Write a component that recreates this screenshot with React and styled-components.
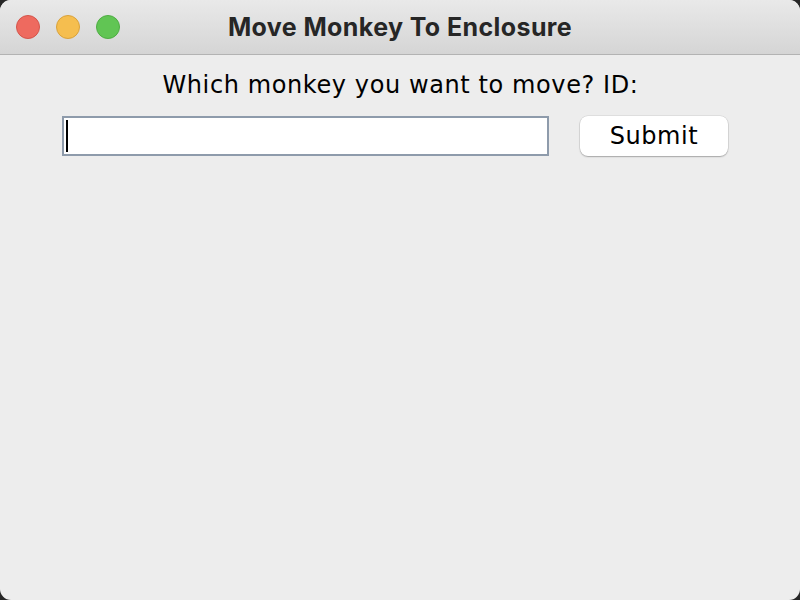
import React from 'react';
import styled, { createGlobalStyle } from 'styled-components';

const GlobalStyle = createGlobalStyle`
  html, body {
    margin: 0;
    padding: 0;
    background: #262626;
  }
`;

const Window = styled.div`
  width: 800px;
  height: 600px;
  border-radius: 11px;
  overflow: hidden;
  background: #ededed;
  display: flex;
  flex-direction: column;
`;

const TitleBar = styled.div`
  height: 55px;
  flex: none;
  display: grid;
  grid-template-columns: 1fr auto 1fr;
  align-items: center;
  background: linear-gradient(#e9e9e9, #d5d5d5);
  border-bottom: 1px solid #b3b3b3;
  box-sizing: border-box;
`;

const Lights = styled.div`
  display: flex;
  gap: 16px;
  padding-left: 16px;
`;

const Light = styled.span`
  width: 24px;
  height: 24px;
  border-radius: 50%;
  box-sizing: border-box;
  background: ${(p) => p.color};
  border: 1px solid ${(p) => p.edge};
`;

const Title = styled.div`
  font-family: Inter, "Liberation Sans", sans-serif;
  font-weight: 700;
  font-size: 25px;
  letter-spacing: 0.4px;
  color: #262626;
`;

const Content = styled.div`
  flex: 1;
  display: flex;
  flex-direction: column;
  align-items: center;
  padding-top: 14px;
  font-family: "DejaVu Sans", sans-serif;
  font-size: 24px;
  letter-spacing: 0.6px;
  color: #000;
`;

const Label = styled.div`
  height: 32px;
  line-height: 32px;
  margin-left: 1px;
`;

const Row = styled.div`
  display: flex;
  align-items: center;
  margin-top: 15px;
  margin-right: 10px;
  gap: 31px;
`;

const Field = styled.div`
  width: 487px;
  height: 40px;
  box-sizing: border-box;
  background: #fff;
  border: 2px solid #8e9bab;
  display: flex;
  align-items: center;
  padding-left: 2px;
`;

const Caret = styled.span`
  width: 2px;
  height: 32px;
  background: #000;
`;

const Button = styled.button`
  width: 148px;
  height: 40px;
  border: none;
  border-radius: 8px;
  background: #fff;
  box-shadow: 0 0 0 0.5px rgba(0, 0, 0, 0.12), 0 1px 1.5px rgba(0, 0, 0, 0.25);
  font-family: "DejaVu Sans", sans-serif;
  font-size: 24px;
  letter-spacing: 0.6px;
  color: #000;
  padding: 0;
  cursor: pointer;
`;

export default function App() {
  return (
    <>
      <GlobalStyle />
      <Window>
        <TitleBar>
          <Lights>
            <Light color="#ee6a5f" edge="#d4554b" />
            <Light color="#f5be4f" edge="#d9a23c" />
            <Light color="#61c554" edge="#4fad43" />
          </Lights>
          <Title>Move Monkey To Enclosure</Title>
          <div />
        </TitleBar>
        <Content>
          <Label>Which monkey you want to move? ID:</Label>
          <Row>
            <Field>
              <Caret />
            </Field>
            <Button>Submit</Button>
          </Row>
        </Content>
      </Window>
    </>
  );
}
